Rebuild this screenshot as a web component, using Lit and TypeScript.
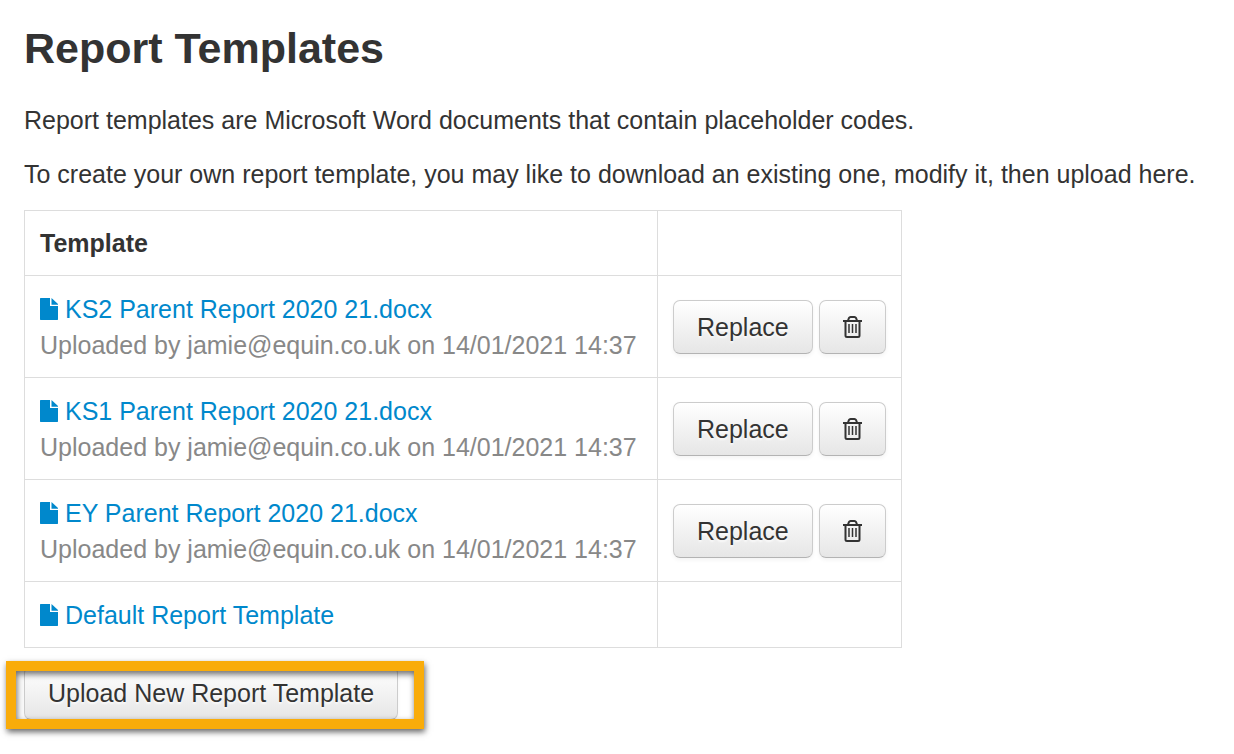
import { LitElement, html, css, svg, nothing } from "lit";
import { customElement } from "lit/decorators.js";

interface Template {
  name: string;
  uploaded?: string;
}

const templates: Template[] = [
  { name: "KS2 Parent Report 2020 21.docx", uploaded: "Uploaded by jamie@equin.co.uk on 14/01/2021 14:37" },
  { name: "KS1 Parent Report 2020 21.docx", uploaded: "Uploaded by jamie@equin.co.uk on 14/01/2021 14:37" },
  { name: "EY Parent Report 2020 21.docx", uploaded: "Uploaded by jamie@equin.co.uk on 14/01/2021 14:37" },
  { name: "Default Report Template" },
];

const fileIcon = html`<svg class="file" viewBox="0 0 18 22" aria-hidden="true">
  ${svg`<path d="M0.500 0H10V8H18V21.500L17.500 22H0.500L0 21.500V0.500Z" /><path d="M11.500 0L18 6V6.700H11.500Z" />`}
</svg>`;

const trashIcon = html`<svg class="trash" viewBox="0 0 19 22" aria-hidden="true">
  ${svg`<path d="M0 5H19M2.500 5V19.500Q2.500 21 4 21H15Q16.500 21 16.500 19.500V5M5 4.500L6 2Q6.500 1 7.500 1H11.500Q12.500 1 13 2L14 4.500" /><path class="slats" d="M6 8V17M9.500 8V17M13 8V17" />`}
</svg>`;

@customElement("app-root")
export class AppRoot extends LitElement {
  static styles = css`
    :host {
      display: block;
      padding: 24px;
      background: #fff;
      color: #333;
      font-family: "Liberation Sans", Arial, sans-serif;
      font-size: 25px;
      line-height: 36px;
    }
    h1 {
      margin: 0 0 30px;
      font-size: 43px;
      line-height: 48px;
    }
    p {
      margin: 0 0 18px;
    }
    table {
      border-collapse: separate;
      border-spacing: 0;
      border: 1px solid #ddd;
      border-width: 0 1px 1px 0;
      margin-bottom: 18px;
    }
    th,
    td {
      box-sizing: border-box;
      border: 1px solid #ddd;
      border-width: 1px 0 0 1px;
      padding: 15px 15px 14px;
      text-align: left;
      vertical-align: middle;
    }
    th {
      padding-top: 14px;
    }
    .name {
      width: 633px;
    }
    a {
      color: #08c;
      text-decoration: none;
    }
    a:hover {
      text-decoration: underline;
    }
    .file {
      width: 18px;
      height: 22px;
      margin-right: 7px;
      vertical-align: -2px;
      fill: currentColor;
    }
    .trash {
      width: 19px;
      height: 22px;
      fill: none;
      stroke: currentColor;
      stroke-width: 2;
    }
    .slats {
      stroke-width: 1.500;
    }
    .meta {
      color: #888;
      white-space: nowrap;
    }
    .actions {
      display: flex;
      gap: 6px;
    }
    button {
      display: inline-flex;
      align-items: center;
      justify-content: center;
      box-sizing: border-box;
      height: 54px;
      margin: 0;
      padding: 0 23px;
      border: 1px solid #ccc;
      border-bottom-color: #b3b3b3;
      border-radius: 7px;
      background: linear-gradient(#fff, #e6e6e6);
      box-shadow: inset 0 2px 0 rgba(255, 255, 255, 0.2), 0 2px 4px rgba(0, 0, 0, 0.05);
      color: #333;
      font: inherit;
      text-shadow: 0 2px 2px rgba(255, 255, 255, 0.75);
      white-space: nowrap;
      cursor: pointer;
    }
    .upload {
      display: inline-block;
      position: relative;
    }
    .highlight {
      position: absolute;
      inset: -5px -26px -9px -18px;
      border: 10px solid #f9ac0a;
      box-shadow: 1px 3px 6px rgba(0, 0, 0, 0.6), inset 1px 3px 6px rgba(0, 0, 0, 0.6);
      pointer-events: none;
    }
  `;

  render() {
    return html`
      <main>
        <h1>Report Templates</h1>
        <p>Report templates are Microsoft Word documents that contain placeholder codes.</p>
        <p>To create your own report template, you may like to download an existing one, modify it, then upload here.</p>
        <table>
          <thead>
            <tr>
              <th class="name" scope="col">Template</th>
              <th></th>
            </tr>
          </thead>
          <tbody>
            ${templates.map(
              (t) => html`<tr>
                <td>
                  <a href="#">${fileIcon}${t.name}</a>
                  ${t.uploaded ? html`<div class="meta">${t.uploaded}</div>` : nothing}
                </td>
                <td>
                  ${t.uploaded
                    ? html`<div class="actions">
                        <button type="button">Replace</button>
                        <button type="button" aria-label="Delete ${t.name}">${trashIcon}</button>
                      </div>`
                    : nothing}
                </td>
              </tr>`
            )}
          </tbody>
        </table>
        <div class="upload">
          <button type="button">Upload New Report Template</button>
          <div class="highlight"></div>
        </div>
      </main>
    `;
  }
}
